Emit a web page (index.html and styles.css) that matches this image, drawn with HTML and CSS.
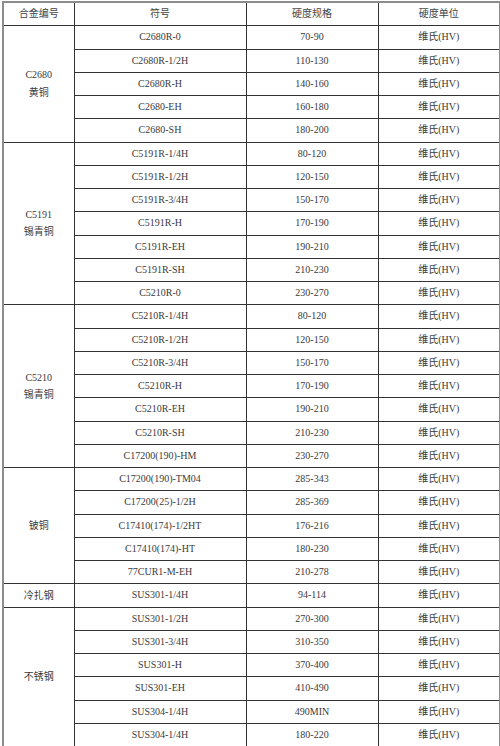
FILE: index.html
```html
<!DOCTYPE html>
<html lang="zh-CN">
<head>
<meta charset="utf-8">
<title>合金硬度规格表</title>
<link rel="stylesheet" href="styles.css">
</head>
<body>
<table class="spec">
  <colgroup>
    <col class="c1"><col class="c2"><col class="c3"><col class="c4">
  </colgroup>
  <thead>
    <tr><th>合金编号</th><th>符号</th><th>硬度规格</th><th>硬度单位</th></tr>
  </thead>
  <tbody>
    <tr><td rowspan="5" class="alloy">C2680<br>黄铜</td><td>C2680R-0</td><td>70-90</td><td>维氏(HV)</td></tr>
    <tr><td>C2680R-1/2H</td><td>110-130</td><td>维氏(HV)</td></tr>
    <tr><td>C2680R-H</td><td>140-160</td><td>维氏(HV)</td></tr>
    <tr><td>C2680-EH</td><td>160-180</td><td>维氏(HV)</td></tr>
    <tr><td>C2680-SH</td><td>180-200</td><td>维氏(HV)</td></tr>

    <tr><td rowspan="7" class="alloy">C5191<br>锡青铜</td><td>C5191R-1/4H</td><td>80-120</td><td>维氏(HV)</td></tr>
    <tr><td>C5191R-1/2H</td><td>120-150</td><td>维氏(HV)</td></tr>
    <tr><td>C5191R-3/4H</td><td>150-170</td><td>维氏(HV)</td></tr>
    <tr><td>C5191R-H</td><td>170-190</td><td>维氏(HV)</td></tr>
    <tr><td>C5191R-EH</td><td>190-210</td><td>维氏(HV)</td></tr>
    <tr><td>C5191R-SH</td><td>210-230</td><td>维氏(HV)</td></tr>
    <tr><td>C5210R-0</td><td>230-270</td><td>维氏(HV)</td></tr>

    <tr><td rowspan="7" class="alloy">C5210<br>锡青铜</td><td>C5210R-1/4H</td><td>80-120</td><td>维氏(HV)</td></tr>
    <tr><td>C5210R-1/2H</td><td>120-150</td><td>维氏(HV)</td></tr>
    <tr><td>C5210R-3/4H</td><td>150-170</td><td>维氏(HV)</td></tr>
    <tr><td>C5210R-H</td><td>170-190</td><td>维氏(HV)</td></tr>
    <tr><td>C5210R-EH</td><td>190-210</td><td>维氏(HV)</td></tr>
    <tr><td>C5210R-SH</td><td>210-230</td><td>维氏(HV)</td></tr>
    <tr><td>C17200(190)-HM</td><td>230-270</td><td>维氏(HV)</td></tr>

    <tr><td rowspan="5" class="alloy">铍铜</td><td>C17200(190)-TM04</td><td>285-343</td><td>维氏(HV)</td></tr>
    <tr><td>C17200(25)-1/2H</td><td>285-369</td><td>维氏(HV)</td></tr>
    <tr><td>C17410(174)-1/2HT</td><td>176-216</td><td>维氏(HV)</td></tr>
    <tr><td>C17410(174)-HT</td><td>180-230</td><td>维氏(HV)</td></tr>
    <tr><td>77CUR1-M-EH</td><td>210-278</td><td>维氏(HV)</td></tr>

    <tr><td class="alloy">冷扎钢</td><td>SUS301-1/4H</td><td>94-114</td><td>维氏(HV)</td></tr>

    <tr><td rowspan="6" class="alloy">不锈钢</td><td>SUS301-1/2H</td><td>270-300</td><td>维氏(HV)</td></tr>
    <tr><td>SUS301-3/4H</td><td>310-350</td><td>维氏(HV)</td></tr>
    <tr><td>SUS301-H</td><td>370-400</td><td>维氏(HV)</td></tr>
    <tr><td>SUS301-EH</td><td>410-490</td><td>维氏(HV)</td></tr>
    <tr><td>SUS304-1/4H</td><td>490MIN</td><td>维氏(HV)</td></tr>
    <tr><td>SUS304-1/4H</td><td>180-220</td><td>维氏(HV)</td></tr>
  </tbody>
</table>
</body>
</html>
```

FILE: styles.css
```css
html, body {
  margin: 0;
  padding: 0;
  background: #ffffff;
}

body {
  padding: 1px 1px 0 2px;
  font-family: "Liberation Serif", "Noto Sans CJK SC", serif;
  font-size: 10px;
  color: #3a3a3a;
}

.spec {
  border-collapse: collapse;
  table-layout: fixed;
  width: 497px;
  border: 2px solid #8c8c8c;
}

.c1 { width: 71px; }
.c2 { width: 172px; }
.c3 { width: 132px; }
.c4 { width: 122px; }

.spec th,
.spec td {
  border: 1px solid #333333;
  height: 22.25px;
  padding: 0;
  text-align: center;
  vertical-align: middle;
  font-weight: normal;
  line-height: 12px;
  white-space: nowrap;
}

.spec th {
  color: #444444;
}

.spec td.alloy {
  line-height: 17.5px;
}
```
